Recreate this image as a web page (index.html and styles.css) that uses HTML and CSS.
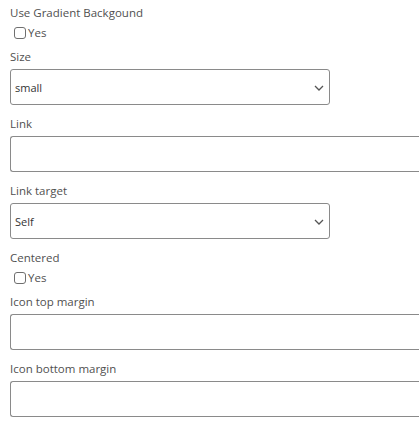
FILE: index.html
```html
<!DOCTYPE html>
<html lang="en">
<head>
<meta charset="utf-8">
<title>Button settings</title>
<link rel="stylesheet" href="styles.css">
</head>
<body>
<form class="settings">
  <div class="field">
    <div class="field-label">Use Gradient Backgound</div>
    <label class="check"><input type="checkbox" class="check-box"><span>Yes</span></label>
  </div>

  <div class="field">
    <label class="field-label" for="size">Size</label>
    <div class="select-wrap">
      <select id="size" class="select">
        <option>small</option>
        <option>medium</option>
        <option>large</option>
      </select>
      <svg class="chevron" width="10" height="6" viewBox="0 0 10 6"><path d="M1 1 L5 5 L9 1" fill="none" stroke="#555" stroke-width="1.3"/></svg>
    </div>
  </div>

  <div class="field">
    <label class="field-label" for="link">Link</label>
    <input id="link" class="text-input" type="text">
  </div>

  <div class="field">
    <label class="field-label" for="target">Link target</label>
    <div class="select-wrap">
      <select id="target" class="select">
        <option>Self</option>
        <option>Blank</option>
      </select>
      <svg class="chevron" width="10" height="6" viewBox="0 0 10 6"><path d="M1 1 L5 5 L9 1" fill="none" stroke="#555" stroke-width="1.3"/></svg>
    </div>
  </div>

  <div class="field">
    <div class="field-label">Centered</div>
    <label class="check"><input type="checkbox" class="check-box"><span>Yes</span></label>
  </div>

  <div class="field">
    <label class="field-label" for="top-margin">Icon top margin</label>
    <input id="top-margin" class="text-input" type="text">
  </div>

  <div class="field">
    <label class="field-label" for="bottom-margin">Icon bottom margin</label>
    <input id="bottom-margin" class="text-input" type="text">
  </div>
</form>
</body>
</html>
```

FILE: styles.css
```css
html, body {
  margin: 0;
  padding: 0;
  background: #ffffff;
  overflow: hidden;
}

body {
  font-family: "Open Sans", "Noto Sans", sans-serif;
  font-size: 11.5px;
  line-height: 16px;
  color: #505050;
}

.settings {
  padding: 5px 0 0 10px;
}

.field {
  display: flex;
  flex-direction: column;
  align-items: stretch;
  margin-bottom: 11px;
}

.field-label {
  display: block;
  margin-bottom: 4px;
}

.check {
  display: flex;
  align-items: center;
  gap: 2px;
  height: 16px;
  margin-bottom: -3px;
  padding-left: 4px;
  color: #505050;
}

.check-box {
  appearance: none;
  -webkit-appearance: none;
  width: 12px;
  height: 12px;
  margin: 0;
  border: 1px solid #6f6f6f;
  border-radius: 3px;
  background: #fff;
}

.select-wrap {
  position: relative;
  width: 320px;
}

.select {
  appearance: none;
  -webkit-appearance: none;
  box-sizing: border-box;
  width: 320px;
  height: 36px;
  margin: 0;
  padding: 0 24px 0 4px;
  border: 1px solid #8a8a8a;
  border-radius: 3px;
  background: #fff;
  font-family: inherit;
  font-size: 11px;
  color: #333;
}

.chevron {
  position: absolute;
  right: 6px;
  top: 16px;
  pointer-events: none;
}

/* text inputs run on past the right edge of the panel */
.text-input {
  box-sizing: border-box;
  width: 100%;
  height: 36px;
  margin: 0;
  padding: 0 4px;
  border: 1px solid #8a8a8a;
  border-right: none;
  border-radius: 3px 0 0 3px;
  background: #fff;
  font-family: inherit;
  font-size: 11px;
  color: #333;
}
```
